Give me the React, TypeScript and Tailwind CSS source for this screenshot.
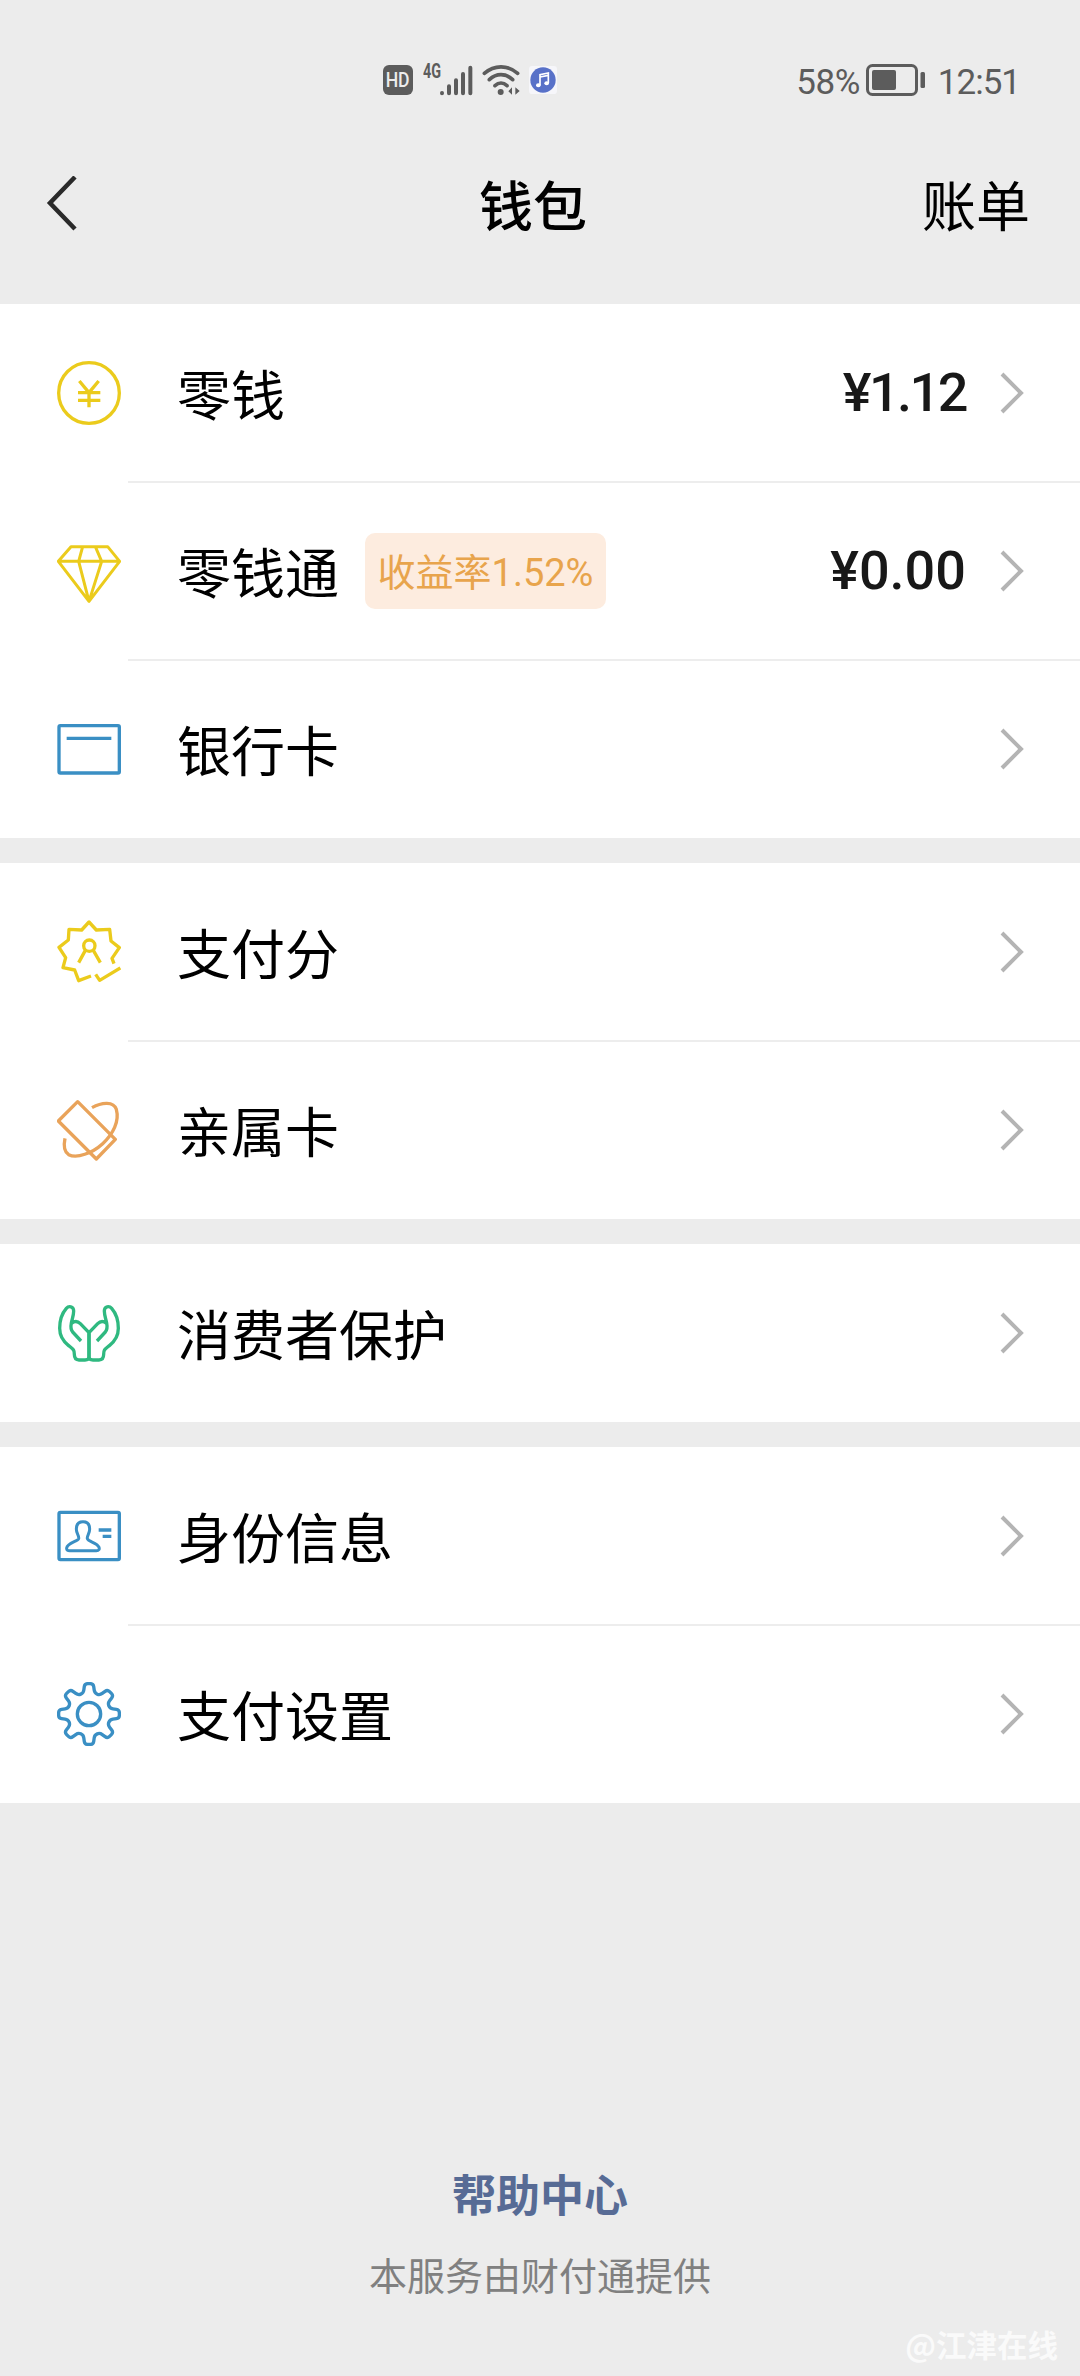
import React from 'react';

type Cell = {
	label: string;
	icon: React.ReactNode;
	badge?: string;
	amount?: React.ReactNode;
};

const YELLOW = '#ebcb1c';
const ORANGE = '#e9a35a';
const GREEN = '#2fb980';
const BLUE = '#3a8fc4';

const IconBase = ({ color, children }: { color: string; children: React.ReactNode }) => (
	<svg
		className="w-16 h-16 shrink-0"
		viewBox="0 0 192 192"
		fill="none"
		stroke={color}
		strokeWidth={10}
		strokeLinejoin="round"
	>
		{children}
	</svg>
);

const CoinIcon = () => (
	<IconBase color={YELLOW}>
		<circle cx="96" cy="96" r="91" />
		<path d="M67 60L96 95L125 60M96 93V139M63 95H130M63 118H130" />
	</IconBase>
);

const DiamondIcon = () => (
	<IconBase color={YELLOW}>
		<path d="M42 23H152L188 67L96 187L4 67ZM4 67H188M77 23L65 67L96 187L134 67L115 23" strokeWidth={9} />
	</IconBase>
);

const BankCardIcon = () => (
	<IconBase color={BLUE}>
		<rect x="6" y="26" width="181" height="142" rx="4" />
		<path d="M29 64H163" />
	</IconBase>
);

const ScoreIcon = () => (
	<IconBase color={YELLOW}>
		<path d="M171 131L165 115L187 83L162 63L158 28L118 30L96 6L74 30L36 28L34 60L6 82L26 113L18 143L53 150L65 182L102 168" />
		<path d="M116 163L128 181L190 144" />
		<circle cx="97" cy="77" r="17" />
		<path d="M85 91L65 128M109 91L130 128" />
	</IconBase>
);

const FamilyCardIcon = () => (
	<IconBase color={ORANGE}>
		<path d="M62 11L175 124L118 183L4 69Z" />
		<path d="M105 29C135 12 170 10 178 34C188 70 168 108 137 137C105 166 60 182 35 170C20 160 20 140 24 121" />
	</IconBase>
);

const HAND = 'M72 120L47 93C40 84 41 76 43 66C46 52 50 42 50 30C50 15 35 14 28 22C14 38 8 60 8 82C8 108 20 122 34 133C50 146 52 146 52 160C52 172 56 177 66 177H84C92 177 96 174 96 168V95L70 68C62 60 52 60 44 67';

const HandsIcon = () => (
	<IconBase color={GREEN}>
		<path d={HAND} />
		<path d={HAND} transform="translate(192 0) scale(-1 1)" />
	</IconBase>
);

const IdentityIcon = () => (
	<IconBase color={BLUE}>
		<rect x="6" y="25" width="181" height="142" rx="4" />
		<path d="M78 53C64 53 58 62 58 75C58 90 67 95 65 104C63 112 31 116 29 132C28 139 33 140 38 140H118C126 140 128 136 126 130C122 116 93 113 91 104C89 96 98 90 98 75C98 62 92 53 78 53Z" strokeWidth={9} />
		<path d="M125 78H163M137 97H163" />
	</IconBase>
);

// 톱니 8개의 꼭짓점을 구한 뒤 모서리를 둥글게 이어준다
const gearPath = (() => {
	const points: number[][] = [];
	for (let i = 0; i < 8; i++) {
		[[65, -15], [92, -8], [92, 8], [65, 15]].forEach(([r, deg]) => {
			const rad = ((i * 45 + deg) * Math.PI) / 180;
			points.push([96 + r * Math.cos(rad), 96 + r * Math.sin(rad)]);
		});
	}
	const toward = (a: number[], b: number[]) => {
		const len = Math.hypot(b[0] - a[0], b[1] - a[1]);
		const t = Math.min(9, len / 2) / len;
		return `${(a[0] + (b[0] - a[0]) * t).toFixed(1)} ${(a[1] + (b[1] - a[1]) * t).toFixed(1)}`;
	};
	return (
		points
			.map((p, i) => {
				const prev = points[(i + points.length - 1) % points.length];
				const next = points[(i + 1) % points.length];
				return `${i ? 'L' : 'M'}${toward(p, prev)}Q${p[0].toFixed(1)} ${p[1].toFixed(1)} ${toward(p, next)}`;
			})
			.join('') + 'Z'
	);
})();

const GearIcon = () => (
	<IconBase color={BLUE}>
		<path d={gearPath} />
		<circle cx="96" cy="96" r="35" />
	</IconBase>
);

const groups: Cell[][] = [
	[
		{ label: '零钱', icon: <CoinIcon />, amount: <span className="tracking-[-2.500px]">¥1.12</span> },
		{ label: '零钱通', icon: <DiamondIcon />, badge: '收益率1.52%', amount: <span>¥0.00</span> },
		{ label: '银行卡', icon: <BankCardIcon /> },
	],
	[
		{ label: '支付分', icon: <ScoreIcon /> },
		{ label: '亲属卡', icon: <FamilyCardIcon /> },
	],
	[{ label: '消费者保护', icon: <HandsIcon /> }],
	[
		{ label: '身份信息', icon: <IdentityIcon /> },
		{ label: '支付设置', icon: <GearIcon /> },
	],
];

const StatusBar = () => (
	<div className="h-[112px] pt-[48px] pl-[383px] pr-[60px] flex justify-between text-[#5c5c5c] font-['Roboto',sans-serif]">
		<div className="h-16 flex items-center">
			<div className="w-[30px] h-[30px] rounded-[6px] bg-[#5c5c5c] text-[#ececec] flex items-center justify-center font-medium text-[20px] leading-none">
				<span className="scale-x-[0.88]">HD</span>
			</div>
			<span className="ml-[10px] mb-[18px] w-[17px] origin-left scale-x-[0.72] font-bold text-[20px] leading-none">4G</span>
			<svg className="w-[33px] h-[32px]" viewBox="0 0 99 96" stroke="currentColor" strokeWidth={12} strokeLinecap="round">
				<path d="M6 87V88M27 67V88M48 49V88M69 30V88M91 11V88" />
			</svg>
			<svg className="ml-[9px] w-[38px] h-[32px]" viewBox="0 0 114 96" fill="none" stroke="currentColor" strokeWidth={11} strokeLinecap="round">
				<path d="M7 28C37 2 77 2 107 28M22 47C43 27 71 27 92 47M39 65C50 55 64 55 75 65" />
				<circle cx="56" cy="84" r="9" fill="currentColor" stroke="none" />
				<path d="M90 70V92L79 82ZM100 70V92L113 81Z" fill="currentColor" stroke="none" />
			</svg>
			<svg className="ml-[9px] w-[28px] h-[28px]" viewBox="0 0 84 84">
				<rect width="84" height="84" rx="10" fill="#f6f6fa" />
				<circle cx="42" cy="42" r="38" fill="#5871c8" />
				<g fill="none" stroke="#fff" strokeWidth={5}>
					<path d="M33 57V26L58 21V51" />
					<path d="M33 33L58 28" />
				</g>
				<ellipse cx="28" cy="58" rx="7" ry="6" fill="#fff" />
				<ellipse cx="53" cy="52" rx="7" ry="6" fill="#fff" />
			</svg>
		</div>
		<div className="h-16 flex items-center text-[35px] leading-none">
			<span className="pt-[4px] tracking-[-0.500px]">58%</span>
			<svg className="ml-[6px] mr-[12px] w-[60px] h-[32px]" viewBox="0 0 60 32" fill="none" stroke="currentColor">
				<rect x="1.500" y="1.500" width="49" height="29" rx="5" strokeWidth="3" />
				<rect x="6" y="6" width="24" height="20" rx="2" fill="currentColor" stroke="none" />
				<rect x="54.500" y="8" width="4.500" height="16" rx="1.500" fill="currentColor" stroke="none" />
			</svg>
			<span className="pt-[4px] tracking-[-1px]">12:51</span>
		</div>
	</div>
);

const NavBar = () => (
	<div className="h-[192px] pb-[8px] pl-[36px] pr-[50px] grid grid-cols-[1fr_auto_1fr] items-center text-[54px] leading-none text-black">
		<svg className="ml-[9px] w-[32px] h-[56px]" viewBox="0 0 32 56" fill="none" stroke="#2a2a2a" strokeWidth="4.500">
			<path d="M30 1L5 27L30 53" />
		</svg>
		<h1 className="font-medium">钱包</h1>
		<span className="text-right">账单</span>
	</div>
);

const CellRow = ({ label, icon, badge, amount }: Cell) => (
	<div className="h-[178px] pl-[57px] flex items-center">
		{icon}
		<span className="ml-[56px] text-[54px] leading-none text-black">{label}</span>
		{badge && (
			<span className="ml-[26px] w-[241px] h-[76px] pt-[4px] rounded-[10px] bg-[#fdecdf] text-[#e8a44c] text-[38px] leading-none flex items-center justify-center whitespace-nowrap font-['Roboto','Noto_Sans_CJK_SC',sans-serif]">
				{badge}
			</span>
		)}
		<div className="ml-auto pr-[55px] flex items-center text-[54px] leading-none font-medium text-[#181818] font-['Roboto',sans-serif]">
			{amount}
			<svg className="ml-[33px] w-[26px] h-[44px]" viewBox="0 0 26 44" fill="none" stroke="#b4b4b4" strokeWidth="4">
				<path d="M3 3L22 22L3 41" />
			</svg>
		</div>
	</div>
);

const App = () => {
	return (
		<div className="relative w-[1080px] h-[2376px] overflow-hidden flex flex-col bg-[#ececec] font-['Noto_Sans_CJK_SC',sans-serif]">
			<StatusBar />
			<NavBar />
			<div className="flex flex-col gap-[25px]">
				{groups.map((cells, i) => (
					<div key={i} className="bg-white">
						{cells.map((cell, j) => (
							<React.Fragment key={cell.label}>
								{j > 0 && <div className="ml-[128px] h-[2px] -my-px bg-[#ededed]" />}
								<CellRow {...cell} />
							</React.Fragment>
						))}
					</div>
				))}
			</div>
			<div className="mt-auto pb-[83px] flex flex-col items-center gap-[40px] leading-none">
				<span className="text-[44px] leading-none font-bold text-[#576b95]">帮助中心</span>
				<span className="text-[38px] leading-none text-[#808080]">本服务由财付通提供</span>
			</div>
			<span className="absolute right-[22px] bottom-[17px] text-[30.500px] leading-none font-bold text-[#fafafa]">@江津在线</span>
		</div>
	);
};

export default App;
